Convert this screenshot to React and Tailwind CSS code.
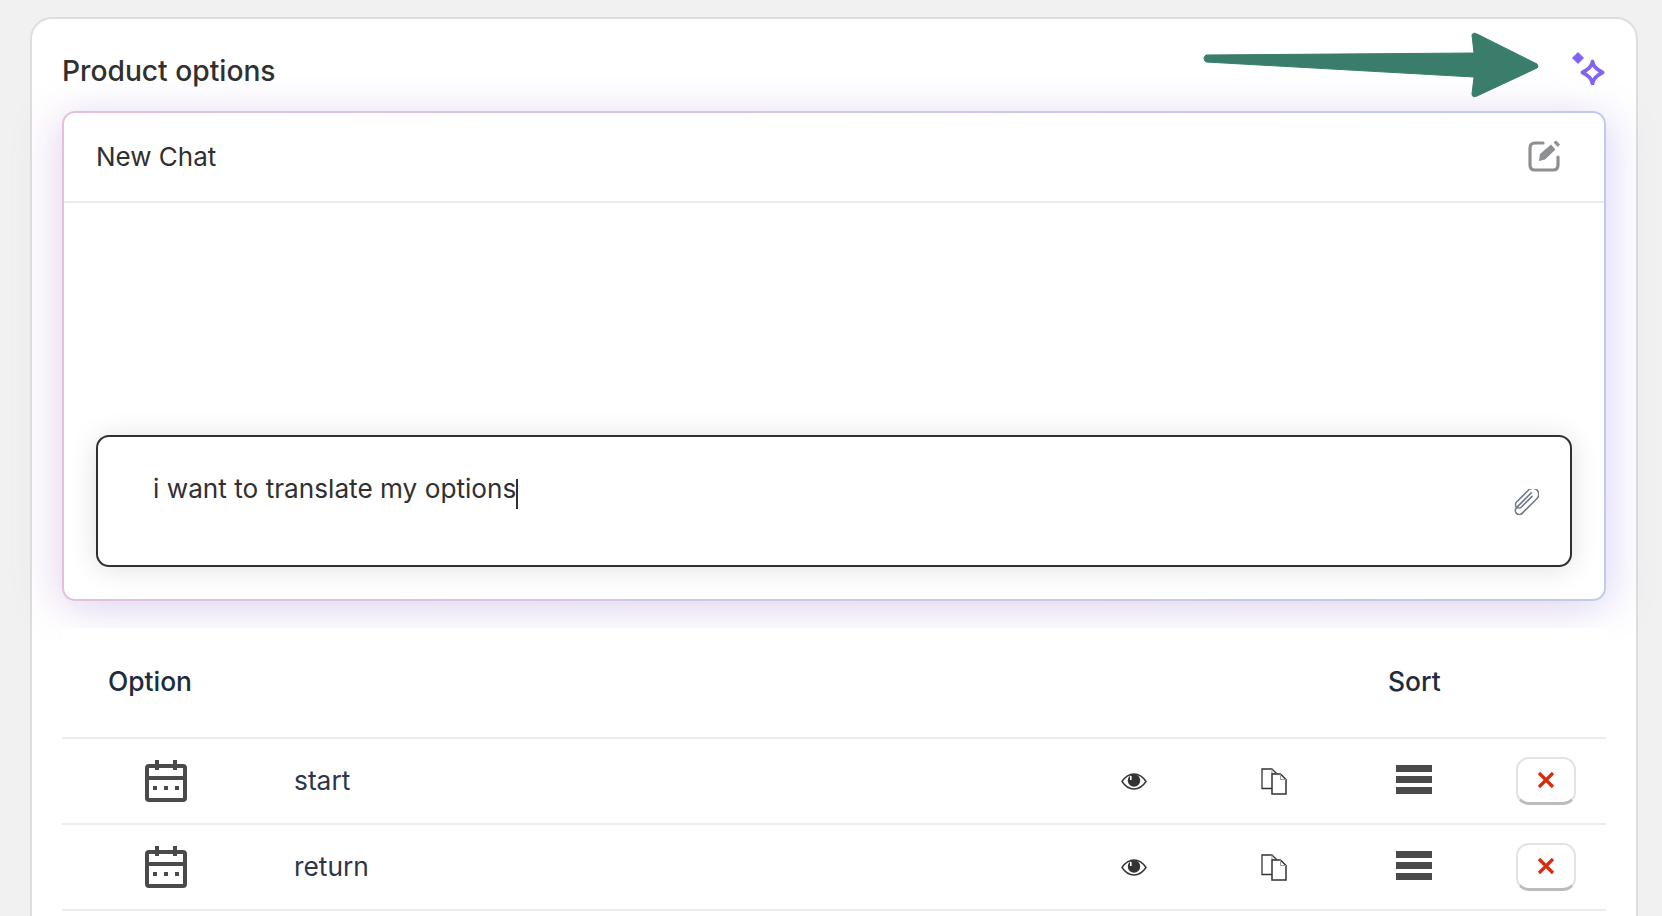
import React from 'react';

const rows = ['start', 'return'];
const rowGrid = 'grid grid-cols-[208px_1fr_140px_140px_140px_122px] items-center';

const Sparkle = () => (
  <svg width="34" height="34" viewBox="0 0 34 34" fill="none">
    <path d="M7 1.5 L12.5 7 L7 12.5 L1.5 7 Z" fill="#8462f0" stroke="#8462f0" strokeWidth="1" strokeLinejoin="round" />
    <path d="M21.5 10.5 C22.5 15.5 25 18 31.5 21.5 C25 25 22.5 27.5 21.5 32.5 C20.5 27.5 18 25 11.5 21.5 C18 18 20.5 15.5 21.5 10.5 Z" stroke="#8462f0" strokeWidth="3.8" strokeLinejoin="round" />
  </svg>
);

const EditIcon = () => (
  <svg width="32" height="32" viewBox="0 0 32 32" fill="none">
    <path d="M15 3 H7 Q2 3 2 8 V25 Q2 30 7 30 H25 Q30 30 30 25 V17" stroke="#8d9093" strokeWidth="3.2" strokeLinecap="round" />
    <path d="M12 14 L23 4.5 L27.5 9.5 L17 19.5 L11 21 Z" fill="#8d9093" />
    <path d="M25.5 2.5 L28 0.5 L32 4.5 L29.8 7 Z" fill="#8d9093" />
  </svg>
);

const PaperclipIcon = () => (
  <svg width="28" height="26" viewBox="0 0 28 26" fill="none">
    <g transform="rotate(-45 14 13)" stroke="#6f7986" strokeWidth="1.6" strokeLinecap="round">
      <path d="M26 13 H5 A4 4 0 0 0 5 21 H26 A5.5 5.5 0 0 0 26 9 H9 A2.5 2.5 0 0 0 9 16 H24" transform="translate(-1 -2)" />
    </g>
  </svg>
);

const CalendarIcon = () => (
  <svg width="42" height="42" viewBox="0 0 42 42" fill="none">
    <rect x="2" y="6" width="38" height="34" rx="2" stroke="#4a4a4a" strokeWidth="4" />
    <rect x="2" y="16" width="38" height="4" fill="#4a4a4a" />
    <rect x="10" y="0" width="4" height="10" fill="#4a4a4a" />
    <rect x="28" y="0" width="4" height="10" fill="#4a4a4a" />
    <rect x="8" y="26" width="4" height="4" fill="#4a4a4a" />
    <rect x="19" y="26" width="4" height="4" fill="#4a4a4a" />
    <rect x="30" y="26" width="4" height="4" fill="#4a4a4a" />
  </svg>
);

const EyeIcon = () => (
  <svg width="26" height="17" viewBox="0 0 26 17" fill="none">
    <path d="M1 8.5 C5 2.5 9 1 13 1 C17 1 21 2.5 25 8.5 C21 14.5 17 16 13 16 C9 16 5 14.5 1 8.5 Z" stroke="#333" strokeWidth="1.4" />
    <circle cx="13" cy="7.5" r="6.2" fill="#333" />
    <rect x="9" y="3" width="1.6" height="4" fill="#fff" />
  </svg>
);

const CopyIcon = () => (
  <svg width="26" height="27" viewBox="0 0 26 27" fill="none">
    <path d="M1 1 H11 L16 6 V20.5 H1 Z" fill="#fff" stroke="#333" strokeWidth="1.3" />
    <path d="M11 1 V6 H16" stroke="#999" strokeWidth="1" />
    <path d="M11 6 H19.5 L25 11.5 V26 H11 Z" fill="#fff" stroke="#333" strokeWidth="1.5" />
    <path d="M19.5 6 V11.5 H25" stroke="#999" strokeWidth="1" />
  </svg>
);

const App = () => {
  return (
    <div className="relative h-[916px] overflow-hidden bg-[#f1f1f1] pt-[17px] pl-[30px] pr-[24px] font-['Inter',sans-serif]">
      <div className="h-[1000px] rounded-t-[22px] border-2 border-[#dedede] bg-white pl-[30px] pr-[30px]">
        {/* Title row */}
        <div className="flex h-[92px] items-center justify-between pt-[13px]">
          <h2 className="text-[28.2px] font-medium text-[#303030]">Product options</h2>
          <div className="-mt-[8px] mr-[1px]">
            <Sparkle />
          </div>
        </div>

        {/* Chat box */}
        <div className="rounded-[13px] bg-gradient-to-r from-[#e2c0dc] to-[#bfcbea] p-[2px] shadow-[-12px_6px_40px_rgba(190,130,200,0.2),12px_6px_40px_rgba(120,120,220,0.18)]">
          <div className="flex h-[486px] flex-col rounded-[11px] bg-white">
            <div className="flex h-[90px] shrink-0 items-center justify-between border-b-2 border-[#ebebf0] pb-[2px] pl-[32px] pr-[44px]">
              <span className="text-[26px] text-[#303030]">New Chat</span>
              <EditIcon />
            </div>
            <div className="flex flex-1 flex-col justify-end px-[32px] pb-[32px]">
              <div className="relative h-[132px] rounded-[13px] border-2 border-[#303030] bg-white pl-[55px] pt-[33px] shadow-[0_2px_28px_rgba(0,0,0,0.12)]">
                <span className="text-[26.2px] leading-[38px] text-[#303030]">i want to translate my options</span>
                <span className="inline-block h-[30px] w-[2px] bg-[#303030] align-middle" />
                <div className="absolute right-[31px] top-[52px]">
                  <PaperclipIcon />
                </div>
              </div>
            </div>
          </div>
        </div>

        {/* Options table */}
        <div className="relative mt-[27px] bg-white">
          <div className="relative flex h-[111px] items-center border-b-2 border-[#ebebf0] pb-[2px] text-[26.4px] font-medium text-[#202b3c]">
            <span className="pl-[46px]">Option</span>
            <span className="absolute left-[1326px]">Sort</span>
          </div>
          {rows.map((name) => (
            <div key={name} className={`${rowGrid} h-[86px] border-b-2 border-[#ebebf0]`}>
              <div className="flex justify-center">
                <CalendarIcon />
              </div>
              <span className="pl-[24px] text-[26.3px] text-[#2b3648]">{name}</span>
              <div className="flex justify-center">
                <EyeIcon />
              </div>
              <div className="flex justify-center">
                <CopyIcon />
              </div>
              <div className="-mt-[4px] flex flex-col items-center gap-[4px]">
                <div className="h-[7px] w-[36px] bg-[#4a4a4a]" />
                <div className="h-[7px] w-[36px] bg-[#4a4a4a]" />
                <div className="h-[7px] w-[36px] bg-[#4a4a4a]" />
              </div>
              <div className="flex justify-center pl-[1px]">
                <button className="-mt-[1px] flex h-[48px] w-[60px] shrink-0 items-center justify-center rounded-[13px] border-2 border-b-[3px] border-[#e3e3e3] border-b-[#bdbdbd] bg-white">
                  <svg width="18" height="18" viewBox="0 0 18 18">
                    <path d="M2 2 L16 16 M16 2 L2 16" stroke="#d82c0d" strokeWidth="3.2" />
                  </svg>
                </button>
              </div>
            </div>
          ))}
        </div>
      </div>

      {/* Annotation arrow */}
      <svg className="absolute left-[1195px] top-[25px]" width="350" height="80" viewBox="0 0 350 80">
        <path d="M11 37 Q7 33.5 11 30 L279 28 L277 10 Q278 7 282 9 L342 39 Q344 42 342 43 L282 71 Q277 73 277 69 L279 52 Z" fill="#3b7d6b" stroke="#3b7d6b" strokeWidth="1" strokeLinejoin="round" />
      </svg>
    </div>
  );
};

export default App;
